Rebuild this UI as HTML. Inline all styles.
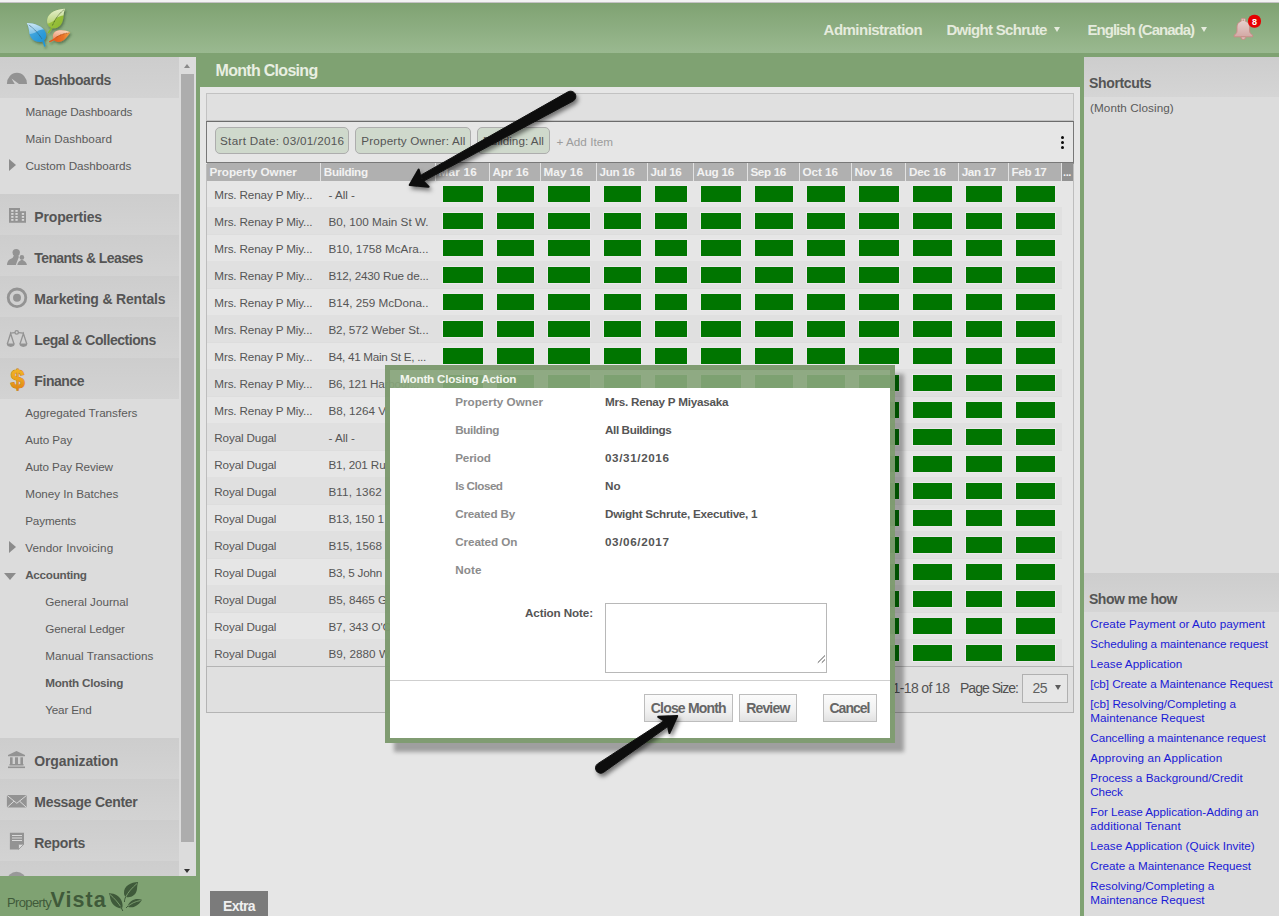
<!DOCTYPE html>
<html lang="en"><head><meta charset="utf-8"><title>Month Closing</title>
<style>
*{box-sizing:border-box;margin:0;padding:0}
html,body{width:1279px;height:916px;overflow:hidden}
body{position:relative;background:#7fa272;font-family:"Liberation Sans",sans-serif;font-size:13px;color:#555}
.abs{position:absolute}
.t{position:absolute;white-space:nowrap;display:block}
#topstrip{left:0;top:0;width:1279px;height:3px;background:linear-gradient(#f3f3f3 0,#f3f3f3 55%,#a9a6aa 100%)}
#hdr{left:0;top:3px;width:1279px;height:50px;background:linear-gradient(#7fa272,#9ab990)}
#nav{left:0;top:57px;width:179px;height:819px;background:#dcdcdc;overflow:hidden}
.nh{position:absolute;left:0;width:179px;height:41px;background:linear-gradient(#cdcdcd,#d3d3d3)}
#sb{left:179px;top:57px;width:17px;height:819px;background:#dcdcdc}
#sbthumb{left:181px;top:74px;width:13px;height:768px;background:#adadad}
#foot{left:0;top:876px;width:200px;height:40px;background:#7fa272}
#main{left:200px;top:87px;width:880px;height:829px;background:#e6e6e6}
#rp{left:1084px;top:57px;width:195px;height:859px;background:#dcdcdc}
.rph{position:absolute;left:0;width:195px;background:linear-gradient(#cdcdcd,#d5d5d5)}
</style></head>
<body>
<div class="abs" id="topstrip"></div>
<div class="abs" id="hdr"></div>
<svg class="abs" style="left:22px;top:4px" width="56" height="48" viewBox="22 4 56 48">
<defs>
<linearGradient id="lg" x1="0" y1="0" x2="1" y2="1"><stop offset="0" stop-color="#a6c84e"/><stop offset="1" stop-color="#8ab82a"/></linearGradient>
<linearGradient id="lb" x1="0" y1="0" x2="1" y2="1"><stop offset="0" stop-color="#58b0e0"/><stop offset="1" stop-color="#1c92d6"/></linearGradient>
<linearGradient id="lo" x1="0" y1="0" x2="1" y2="0"><stop offset="0" stop-color="#e4581c"/><stop offset=".6" stop-color="#e87428"/><stop offset="1" stop-color="#f2a848"/></linearGradient>
<linearGradient id="gl" x1="0" y1="0" x2="0" y2="1"><stop offset="0" stop-color="#fff" stop-opacity=".78"/><stop offset="1" stop-color="#fff" stop-opacity=".3"/></linearGradient>
<clipPath id="cg"><path d="M64.900 8.800 C58 9 48.500 12 47.200 19.500 C46.600 23.500 48.500 27.300 52.500 28.300 C58 28.800 62.500 25 63.300 18 C63.600 14.500 64 11.500 64.900 8.800 Z"/></clipPath>
<clipPath id="cb"><path d="M26.800 23.100 C33 23 44 26 46 33.500 C46.800 37 45 41 41 41.900 C35 42.500 30 38.500 29.300 33 C29 29.500 28.500 26 26.800 23.100 Z"/></clipPath>
<clipPath id="co"><path d="M70.200 32.400 C66 30 59 29.300 55.500 31.500 C52.500 33.500 52.200 37.500 54 40 C56 42.500 61 42.800 64.500 39.500 C67 37 68.500 34.500 70.200 32.400 Z"/></clipPath>
<filter id="ls" x="-30%" y="-30%" width="160%" height="170%"><feDropShadow dx="1.200" dy="1.800" stdDeviation="1.300" flood-color="#233a1c" flood-opacity=".5"/></filter>
</defs>
<g filter="url(#ls)">
<path d="M52.600 25.500 L47.600 32.800 L49 33.200 L53.600 26.500 Z" fill="#86b82c"/>
<path d="M64.900 8.800 C58 9 48.500 12 47.200 19.500 C46.600 23.500 48.500 27.300 52.500 28.300 C58 28.800 62.500 25 63.300 18 C63.600 14.500 64 11.500 64.900 8.800 Z" fill="url(#lg)"/>
<path d="M41.500 38.500 L44.300 46.900 L45.600 46 L43.400 38.200 Z" fill="#1e96d8"/>
<path d="M26.800 23.100 C33 23 44 26 46 33.500 C46.800 37 45 41 41 41.900 C35 42.500 30 38.500 29.300 33 C29 29.500 28.500 26 26.800 23.100 Z" fill="url(#lb)"/>
<path d="M56 37.500 L49 41.300 L49.500 42.400 L57 39 Z" fill="#e4581c"/>
<path d="M70.200 32.400 C66 30 59 29.300 55.500 31.500 C52.500 33.500 52.200 37.500 54 40 C56 42.500 61 42.800 64.500 39.500 C67 37 68.500 34.500 70.200 32.400 Z" fill="url(#lo)"/>
</g>
<g clip-path="url(#cg)"><path d="M44 7 H66 V15.200 C60 15.800 57.500 17 55 19.500 C52 22.500 49.500 23.500 45 24 Z" fill="url(#gl)"/></g>
<g clip-path="url(#cb)"><path d="M25 21 H47 V29.300 C42 28.800 39.500 29.800 37 31.500 C34 33.500 31.500 34 28 34.300 Z" fill="url(#gl)"/></g>
<g clip-path="url(#co)"><path d="M51 28 H70 L69 33 C63 33.200 57.500 35.500 52.500 39.500 L51 39 Z" fill="url(#gl)"/></g>
<g fill="none" stroke-width=".9" stroke-dasharray="1.100 .5">
<path d="M63.700 10 C58.500 14 55 19.500 52.300 25.800" stroke="#3c5420" stroke-opacity=".8"/>
<path d="M28.800 25 C34 28.500 38.500 33.500 42 39" stroke="#285068" stroke-opacity=".75"/>
<path d="M68.800 32.900 C63 33.500 59 35.500 55.500 37.800" stroke="#9a4418" stroke-opacity=".7"/>
</g>
</svg>
<span class="t" style="left:823.6px;top:19.8px;font-size:15px;font-weight:700;color:#e5ebdd;line-height:20px;letter-spacing:-0.525px;">Administration</span>
<span class="t" style="left:946.4px;top:19.8px;font-size:15px;font-weight:700;color:#e5ebdd;line-height:20px;letter-spacing:-0.687px;">Dwight Schrute</span>
<span class="t" style="left:1087.6px;top:19.8px;font-size:15px;font-weight:700;color:#e5ebdd;line-height:20px;letter-spacing:-1.007px;">English (Canada)</span>
<div class="abs" style="left:1054.400px;top:27.200px;border-left:3px solid transparent;border-right:3px solid transparent;border-top:5.500px solid #e5ebdd"></div>
<div class="abs" style="left:1201px;top:27.200px;border-left:3px solid transparent;border-right:3px solid transparent;border-top:5.500px solid #e5ebdd"></div>
<svg class="abs" style="left:1230px;top:12px" width="34" height="32" viewBox="1230 12 34 32">
<defs><linearGradient id="bg" x1="0" y1="0" x2="0" y2="1"><stop offset="0" stop-color="#e8d6d3"/><stop offset="1" stop-color="#d3a8a4"/></linearGradient></defs>
<g fill="url(#bg)" stroke="#cc8a86" stroke-width=".9" stroke-linejoin="round">
<path d="M1241.200 21.200 L1241.200 19.600 a1.200 1.200 0 0 1 1.200 -1.200 h1.800 a1.200 1.200 0 0 1 1.200 1.200 L1245.400 21.200 C1248.300 22 1249.600 24.500 1249.600 27 L1249.600 31 C1249.600 33 1251 34 1252.600 35 L1252.600 36.800 L1234.200 36.800 L1234.200 35 C1235.800 34 1237 33 1237 31 L1237 27 C1237 24.500 1238.300 22 1241.200 21.200 Z"/>
<path d="M1241.200 37 L1241.200 37.800 a2.100 1.700 0 0 0 4.200 0 L1245.400 37 Z"/>
</g>
<rect x="1242.500" y="19.600" width="1.600" height="1" fill="#b87a60"/>
<rect x="1248" y="14.800" width="13" height="13" rx="6" fill="#e60000"/>
<text x="1254.500" y="24.500" font-family="Liberation Sans, sans-serif" font-size="9" font-weight="700" fill="#fff" text-anchor="middle">8</text>
</svg>
<div class="abs" id="nav">
<div class="nh" style="top:0px"></div>
<div class="nh" style="top:137px"></div>
<div class="nh" style="top:178px"></div>
<div class="nh" style="top:219px"></div>
<div class="nh" style="top:260px"></div>
<div class="nh" style="top:301px"></div>
<div class="nh" style="top:681px"></div>
<div class="nh" style="top:722px"></div>
<div class="nh" style="top:763px"></div>
<div class="nh" style="top:804px"></div>
</div>
<span class="t" style="left:34.3px;top:70.1px;font-size:14px;font-weight:700;color:#555;line-height:20px;letter-spacing:-0.432px;">Dashboards</span>
<span class="t" style="left:34.3px;top:207.1px;font-size:14px;font-weight:700;color:#555;line-height:20px;letter-spacing:-0.155px;">Properties</span>
<span class="t" style="left:34.3px;top:248.1px;font-size:14px;font-weight:700;color:#555;line-height:20px;letter-spacing:-0.601px;">Tenants &amp; Leases</span>
<span class="t" style="left:34.3px;top:289.1px;font-size:14px;font-weight:700;color:#555;line-height:20px;letter-spacing:-0.189px;">Marketing &amp; Rentals</span>
<span class="t" style="left:34.3px;top:330.1px;font-size:14px;font-weight:700;color:#555;line-height:20px;letter-spacing:-0.443px;">Legal &amp; Collections</span>
<span class="t" style="left:34.3px;top:371.1px;font-size:14px;font-weight:700;color:#555;line-height:20px;letter-spacing:-0.429px;">Finance</span>
<span class="t" style="left:34.3px;top:751.1px;font-size:14px;font-weight:700;color:#555;line-height:20px;letter-spacing:-0.147px;">Organization</span>
<span class="t" style="left:34.3px;top:792.1px;font-size:14px;font-weight:700;color:#555;line-height:20px;letter-spacing:-0.306px;">Message Center</span>
<span class="t" style="left:34.3px;top:833.1px;font-size:14px;font-weight:700;color:#555;line-height:20px;letter-spacing:-0.315px;">Reports</span>
<span class="t" style="left:25.4px;top:101.9px;font-size:11.7px;font-weight:400;color:#5a5a5a;line-height:20px;letter-spacing:-0.095px;">Manage Dashboards</span>
<span class="t" style="left:25.4px;top:128.9px;font-size:11.7px;font-weight:400;color:#5a5a5a;line-height:20px;letter-spacing:0.060px;">Main Dashboard</span>
<span class="t" style="left:25.4px;top:155.9px;font-size:11.7px;font-weight:400;color:#5a5a5a;line-height:20px;letter-spacing:-0.032px;">Custom Dashboards</span>
<span class="t" style="left:25.2px;top:402.9px;font-size:11.7px;font-weight:400;color:#5a5a5a;line-height:20px;letter-spacing:-0.010px;">Aggregated Transfers</span>
<span class="t" style="left:25.2px;top:429.9px;font-size:11.7px;font-weight:400;color:#5a5a5a;line-height:20px;letter-spacing:-0.030px;">Auto Pay</span>
<span class="t" style="left:25.2px;top:456.9px;font-size:11.7px;font-weight:400;color:#5a5a5a;line-height:20px;letter-spacing:-0.080px;">Auto Pay Review</span>
<span class="t" style="left:25.2px;top:483.9px;font-size:11.7px;font-weight:400;color:#5a5a5a;line-height:20px;letter-spacing:-0.029px;">Money In Batches</span>
<span class="t" style="left:25.2px;top:510.9px;font-size:11.7px;font-weight:400;color:#5a5a5a;line-height:20px;letter-spacing:-0.134px;">Payments</span>
<span class="t" style="left:25.2px;top:537.9px;font-size:11.7px;font-weight:400;color:#5a5a5a;line-height:20px;letter-spacing:0.105px;">Vendor Invoicing</span>
<span class="t" style="left:25.2px;top:564.9px;font-size:11.7px;font-weight:700;color:#5a5a5a;line-height:20px;letter-spacing:-0.278px;">Accounting</span>
<span class="t" style="left:45.2px;top:591.9px;font-size:11.7px;font-weight:400;color:#5a5a5a;line-height:20px;letter-spacing:0.002px;">General Journal</span>
<span class="t" style="left:45.2px;top:618.9px;font-size:11.7px;font-weight:400;color:#5a5a5a;line-height:20px;letter-spacing:-0.110px;">General Ledger</span>
<span class="t" style="left:45.2px;top:645.9px;font-size:11.7px;font-weight:400;color:#5a5a5a;line-height:20px;letter-spacing:0.019px;">Manual Transactions</span>
<span class="t" style="left:45.2px;top:672.9px;font-size:11.7px;font-weight:700;color:#5a5a5a;line-height:20px;letter-spacing:-0.250px;">Month Closing</span>
<span class="t" style="left:45.2px;top:699.9px;font-size:11.7px;font-weight:400;color:#5a5a5a;line-height:20px;letter-spacing:-0.170px;">Year End</span>
<div class="abs" style="left:9px;top:159px;border-top:6.5px solid transparent;border-bottom:6.5px solid transparent;border-left:7px solid #8c8c8c"></div>
<div class="abs" style="left:9px;top:541px;border-top:6.5px solid transparent;border-bottom:6.5px solid transparent;border-left:7px solid #8c8c8c"></div>
<div class="abs" style="left:4px;top:573px;border-left:6.5px solid transparent;border-right:6.5px solid transparent;border-top:7px solid #8c8c8c"></div>
<svg class="abs" style="left:0;top:57px" width="34" height="820" viewBox="0 57 34 820">
<defs><linearGradient id="dg" x1="0" y1="0" x2="0" y2="1"><stop offset="0" stop-color="#f4bc28"/><stop offset=".55" stop-color="#eba01c"/><stop offset="1" stop-color="#dc7a10"/></linearGradient></defs>
<g fill="#939393">
<!-- dashboards gauge -->
<path d="M6.900 84 a10.050 11.200 0 0 1 20.100 0 h-8 l-7.500 -5.500 l3.200 5.500 Z"/>
<!-- properties building -->
<path d="M9 208 h11 v3.200 h6 v11.600 h-17 Z"/>
<g fill="#d8d8d8"><rect x="11.200" y="210" width="2.300" height="1.800"/><rect x="15.400" y="210" width="2.300" height="1.800"/><rect x="11.200" y="213" width="2.300" height="1.800"/><rect x="15.400" y="213" width="2.300" height="1.800"/><rect x="11.200" y="216" width="2.300" height="1.800"/><rect x="15.400" y="216" width="2.300" height="1.800"/><rect x="11.200" y="219" width="2.300" height="1.800"/><rect x="15.400" y="219" width="2.300" height="1.800"/><rect x="21.800" y="213" width="2.300" height="1.800"/><rect x="21.800" y="216" width="2.300" height="1.800"/><rect x="21.800" y="219" width="2.300" height="1.800"/></g>
<!-- tenants -->
<circle cx="16.200" cy="252.600" r="3.700"/><path d="M7 265 C7.300 260.500 9.500 259 12.500 258 L14.500 254.500 L19 256.500 L15.800 265 Z"/>
<circle cx="21.900" cy="257.400" r="2.300"/><path d="M17.300 265 C17.800 261.800 19.800 260.800 21.900 259.500 C24 260.800 26.500 261.800 27 265 Z"/>
</g>
<!-- marketing target -->
<circle cx="17" cy="297.800" r="8.800" fill="none" stroke="#939393" stroke-width="2.800"/><circle cx="17" cy="297.800" r="4" fill="#939393"/>
<!-- legal scales -->
<g fill="none" stroke="#939393" stroke-width="1.300"><circle cx="16.700" cy="332.400" r="1.700"/><path d="M10.300 333.200 L15 332.600 M18.400 332.600 L23.700 333.200"/><path d="M7.300 344 L10.600 333.500 L14 344"/><path d="M20 344 L23.400 333.500 L26.800 344"/></g>
<g fill="#939393"><path d="M6.800 343.600 h7.900 a3.950 3.300 0 0 1 -7.900 0 Z"/><path d="M19.400 343.600 h7.900 a3.950 3.300 0 0 1 -7.900 0 Z"/>
<!-- organization -->
<path d="M8 755 L16.500 751 L25 755 v1.200 h-17 Z"/><rect x="10" y="757.300" width="2.600" height="7.200"/><rect x="15" y="757.300" width="3" height="7.200"/><rect x="20.400" y="757.300" width="2.600" height="7.200"/><rect x="9.500" y="764" width="14" height="1.500"/><rect x="8" y="766.500" width="17" height="1.600"/>
<!-- message -->
<rect x="6.900" y="795" width="19.800" height="12.600" rx="1"/>
<!-- reports -->
<path d="M9.900 832.800 h14.100 v11.300 l-5.500 5.500 h-8.600 Z"/>
</g>
<g stroke="#dadada" stroke-width="1" fill="none"><path d="M7.300 795.600 L16.800 803.300 L26.300 795.600"/><path d="M7.400 807.200 L14 801.200"/><path d="M26.200 807.200 L19.600 801.200"/>
<path d="M12 835.500 h10 M12 838 h10 M12 840.500 h10"/></g>
<path d="M18.500 849.400 v-5.200 h5.400 Z" fill="#dcdcdc" stroke="#939393" stroke-width=".8"/>
<!-- partial next icon -->
<circle cx="16.500" cy="881.300" r="9.600" fill="#999"/>
<text x="17.600" y="388" font-family="Liberation Sans, sans-serif" font-size="25.500" font-weight="700" text-anchor="middle" fill="url(#dg)" stroke="#c87c0c" stroke-width=".9" paint-order="stroke">$</text>
</svg>
<div class="abs" id="sb"></div><div class="abs" id="sbthumb"></div>
<div class="abs" style="left:184px;top:64px;border-left:3.500px solid transparent;border-right:3.500px solid transparent;border-bottom:4px solid #8a8a8a"></div>
<div class="abs" style="left:184px;top:869px;border-left:3.500px solid transparent;border-right:3.500px solid transparent;border-top:4px solid #333"></div>
<div class="abs" id="foot"></div>
<span class="t" style="left:6.9px;top:892.9px;font-size:13px;font-weight:400;color:#3f5a3a;line-height:20px;letter-spacing:-0.605px;">Property</span>
<span class="t" style="left:50.6px;top:890.0px;font-size:21.5px;font-weight:700;color:#3f5a3a;line-height:20px;letter-spacing:1.000px;">Vista</span>
<svg class="abs" style="left:106px;top:878px" width="40" height="38" viewBox="106 878 40 38"><g fill="#3f5a3a">
<path d="M138.100 882 C131 882 123.500 886 124 893.500 C124.200 895.500 125 896.500 126.300 897 C131 898 136.500 895 137 889 C137.200 886.500 137.500 884 138.100 882 Z"/>
<path d="M108.800 893.300 C114 893 120.500 896 122 902 C122.800 905 122.800 907 121.900 908.500 C117 908.500 112 905 110.500 899.500 C110 897 109.800 895 108.800 893.300 Z"/>
<path d="M141.900 899.800 C137 898 130 899 127.500 906.400 C131 908.500 137.500 907.500 141.900 899.800 Z"/>
</g><g stroke="#7fa272" stroke-width=".9" fill="none"><path d="M137 883.500 C132 888 128 892 125.500 897.500"/><path d="M110 894.500 C114 898 119 903 122.300 909.500"/><path d="M140.500 900.500 C135 901.500 131 903.500 127 907"/></g>
<path d="M125.800 896.500 C124.800 899 124.300 900.500 124.500 902 M120.500 906 L122.800 911 M128 906 L126 908" stroke="#3f5a3a" stroke-width="1" fill="none"/></svg>
<span class="t" style="left:215.5px;top:60.5px;font-size:16px;font-weight:700;color:#e9efe2;line-height:20px;letter-spacing:-0.700px;">Month Closing</span>
<div class="abs" id="main"></div>
<div class="abs" style="left:206px;top:93px;width:868px;height:28px;background:#e0e0e0;border:1px solid #c2c2c2"></div>
<div class="abs" style="left:206px;top:121px;width:868px;height:42px;background:#e6e6e6;border:1px solid #787878;border-top-color:#6c6c6c"></div>
<div class="abs" style="left:215px;top:127px;width:134px;height:27px;background:#cfd9cc;border:1px solid #adadad;border-radius:5px;"></div>
<div class="abs" style="left:355px;top:127px;width:116px;height:27px;background:#cfd9cc;border:1px solid #adadad;border-radius:5px;"></div>
<div class="abs" style="left:477px;top:127px;width:73px;height:27px;background:#cfd9cc;border:1px solid #adadad;border-radius:5px;"></div>
<span class="t" style="left:220.0px;top:130.9px;font-size:11.7px;font-weight:400;color:#555;line-height:20px;letter-spacing:0.309px;">Start Date: 03/01/2016</span>
<span class="t" style="left:361.2px;top:130.9px;font-size:11.7px;font-weight:400;color:#555;line-height:20px;letter-spacing:0.190px;">Property Owner: All</span>
<span class="t" style="left:483.0px;top:130.9px;font-size:11.7px;font-weight:400;color:#555;line-height:20px;letter-spacing:0.043px;">Building: All</span>
<span class="t" style="left:556.5px;top:131.9px;font-size:11.7px;font-weight:400;color:#9c9c9c;line-height:20px;letter-spacing:0.030px;">+ Add Item</span>
<div class="abs" style="left:1060.750px;top:135.5px;width:3.400px;height:3.400px;border-radius:2px;background:#0a0a0a"></div>
<div class="abs" style="left:1060.750px;top:140.8px;width:3.400px;height:3.400px;border-radius:2px;background:#0a0a0a"></div>
<div class="abs" style="left:1060.750px;top:146.1px;width:3.400px;height:3.400px;border-radius:2px;background:#0a0a0a"></div>
<div class="abs" style="left:207px;top:163px;width:854px;height:18px;background:#b0b0b0"></div>
<div class="abs" style="left:1061px;top:163px;width:1px;height:18px;background:#e2e2e2"></div><div class="abs" style="left:1062px;top:163px;width:12px;height:18px;background:#929292"></div>
<div class="abs" style="left:320px;top:163px;width:1px;height:18px;background:#e2e2e2"></div>
<div class="abs" style="left:435px;top:163px;width:1px;height:18px;background:#e2e2e2"></div>
<div class="abs" style="left:489px;top:163px;width:1px;height:18px;background:#e2e2e2"></div>
<div class="abs" style="left:540px;top:163px;width:1px;height:18px;background:#e2e2e2"></div>
<div class="abs" style="left:596px;top:163px;width:1px;height:18px;background:#e2e2e2"></div>
<div class="abs" style="left:647px;top:163px;width:1px;height:18px;background:#e2e2e2"></div>
<div class="abs" style="left:693px;top:163px;width:1px;height:18px;background:#e2e2e2"></div>
<div class="abs" style="left:747px;top:163px;width:1px;height:18px;background:#e2e2e2"></div>
<div class="abs" style="left:799px;top:163px;width:1px;height:18px;background:#e2e2e2"></div>
<div class="abs" style="left:851px;top:163px;width:1px;height:18px;background:#e2e2e2"></div>
<div class="abs" style="left:905px;top:163px;width:1px;height:18px;background:#e2e2e2"></div>
<div class="abs" style="left:958px;top:163px;width:1px;height:18px;background:#e2e2e2"></div>
<div class="abs" style="left:1008px;top:163px;width:1px;height:18px;background:#e2e2e2"></div>
<span class="t" style="left:209.5px;top:161.9px;font-size:11.7px;font-weight:700;color:#f2f2f2;line-height:20px;letter-spacing:-0.028px;">Property Owner</span>
<span class="t" style="left:323.8px;top:161.9px;font-size:11.7px;font-weight:700;color:#f2f2f2;line-height:20px;letter-spacing:-0.356px;">Building</span>
<span class="t" style="left:438.5px;top:161.9px;font-size:11.7px;font-weight:700;color:#f2f2f2;line-height:20px;letter-spacing:0.242px;">Mar 16</span>
<span class="t" style="left:492.4px;top:161.9px;font-size:11.7px;font-weight:700;color:#f2f2f2;line-height:20px;letter-spacing:0.002px;">Apr 16</span>
<span class="t" style="left:543.5px;top:161.9px;font-size:11.7px;font-weight:700;color:#f2f2f2;line-height:20px;letter-spacing:0.086px;">May 16</span>
<span class="t" style="left:599.5px;top:161.9px;font-size:11.7px;font-weight:700;color:#f2f2f2;line-height:20px;letter-spacing:-0.372px;">Jun 16</span>
<span class="t" style="left:650.6px;top:161.9px;font-size:11.7px;font-weight:700;color:#f2f2f2;line-height:20px;letter-spacing:-0.373px;">Jul 16</span>
<span class="t" style="left:696.5px;top:161.9px;font-size:11.7px;font-weight:700;color:#f2f2f2;line-height:20px;letter-spacing:-0.245px;">Aug 16</span>
<span class="t" style="left:750.4px;top:161.9px;font-size:11.7px;font-weight:700;color:#f2f2f2;line-height:20px;letter-spacing:-0.348px;">Sep 16</span>
<span class="t" style="left:802.4px;top:161.9px;font-size:11.7px;font-weight:700;color:#f2f2f2;line-height:20px;letter-spacing:-0.022px;">Oct 16</span>
<span class="t" style="left:854.4px;top:161.9px;font-size:11.7px;font-weight:700;color:#f2f2f2;line-height:20px;letter-spacing:-0.055px;">Nov 16</span>
<span class="t" style="left:908.9px;top:161.9px;font-size:11.7px;font-weight:700;color:#f2f2f2;line-height:20px;letter-spacing:-0.134px;">Dec 16</span>
<span class="t" style="left:961.7px;top:161.9px;font-size:11.7px;font-weight:700;color:#f2f2f2;line-height:20px;letter-spacing:-0.365px;">Jan 17</span>
<span class="t" style="left:1011.5px;top:161.9px;font-size:11.7px;font-weight:700;color:#f2f2f2;line-height:20px;letter-spacing:-0.339px;">Feb 17</span>
<span class="t" style="left:1063.0px;top:162.2px;font-size:11px;font-weight:700;color:#f2f2f2;line-height:20px;letter-spacing:-0.391px;">...</span>
<div class="abs" style="left:207px;top:207px;width:855px;height:1px;background:#dddddd"></div>
<span class="t" style="left:214.3px;top:184.9px;font-size:11.7px;font-weight:400;color:#555;line-height:20px;letter-spacing:-0.147px;">Mrs. Renay P Miy...</span>
<span class="t" style="left:328.4px;top:184.9px;font-size:11.7px;font-weight:400;color:#555;line-height:20px;letter-spacing:-0.004px;">- All -</span>
<div class="abs" style="left:443px;top:186px;width:40px;height:16px;background:#007500;box-shadow:0 0 0 1px #ebe9eb"></div>
<div class="abs" style="left:497px;top:186px;width:37px;height:16px;background:#007500;box-shadow:0 0 0 1px #ebe9eb"></div>
<div class="abs" style="left:548px;top:186px;width:42px;height:16px;background:#007500;box-shadow:0 0 0 1px #ebe9eb"></div>
<div class="abs" style="left:604px;top:186px;width:37px;height:16px;background:#007500;box-shadow:0 0 0 1px #ebe9eb"></div>
<div class="abs" style="left:655px;top:186px;width:32px;height:16px;background:#007500;box-shadow:0 0 0 1px #ebe9eb"></div>
<div class="abs" style="left:701px;top:186px;width:40px;height:16px;background:#007500;box-shadow:0 0 0 1px #ebe9eb"></div>
<div class="abs" style="left:755px;top:186px;width:38px;height:16px;background:#007500;box-shadow:0 0 0 1px #ebe9eb"></div>
<div class="abs" style="left:807px;top:186px;width:38px;height:16px;background:#007500;box-shadow:0 0 0 1px #ebe9eb"></div>
<div class="abs" style="left:859px;top:186px;width:40px;height:16px;background:#007500;box-shadow:0 0 0 1px #ebe9eb"></div>
<div class="abs" style="left:913px;top:186px;width:39px;height:16px;background:#007500;box-shadow:0 0 0 1px #ebe9eb"></div>
<div class="abs" style="left:966px;top:186px;width:36px;height:16px;background:#007500;box-shadow:0 0 0 1px #ebe9eb"></div>
<div class="abs" style="left:1016px;top:186px;width:39px;height:16px;background:#007500;box-shadow:0 0 0 1px #ebe9eb"></div>
<div class="abs" style="left:207px;top:207px;width:855px;height:27px;background:#e0e0e0"></div>
<div class="abs" style="left:207px;top:234px;width:855px;height:1px;background:#dddddd"></div>
<span class="t" style="left:214.3px;top:211.9px;font-size:11.7px;font-weight:400;color:#555;line-height:20px;letter-spacing:-0.147px;">Mrs. Renay P Miy...</span>
<span class="t" style="left:328.4px;top:211.9px;font-size:11.7px;font-weight:400;color:#555;line-height:20px;letter-spacing:0.009px;">B0, 100 Main St W.</span>
<div class="abs" style="left:443px;top:213px;width:40px;height:16px;background:#007500;box-shadow:0 0 0 1px #ebe9eb"></div>
<div class="abs" style="left:497px;top:213px;width:37px;height:16px;background:#007500;box-shadow:0 0 0 1px #ebe9eb"></div>
<div class="abs" style="left:548px;top:213px;width:42px;height:16px;background:#007500;box-shadow:0 0 0 1px #ebe9eb"></div>
<div class="abs" style="left:604px;top:213px;width:37px;height:16px;background:#007500;box-shadow:0 0 0 1px #ebe9eb"></div>
<div class="abs" style="left:655px;top:213px;width:32px;height:16px;background:#007500;box-shadow:0 0 0 1px #ebe9eb"></div>
<div class="abs" style="left:701px;top:213px;width:40px;height:16px;background:#007500;box-shadow:0 0 0 1px #ebe9eb"></div>
<div class="abs" style="left:755px;top:213px;width:38px;height:16px;background:#007500;box-shadow:0 0 0 1px #ebe9eb"></div>
<div class="abs" style="left:807px;top:213px;width:38px;height:16px;background:#007500;box-shadow:0 0 0 1px #ebe9eb"></div>
<div class="abs" style="left:859px;top:213px;width:40px;height:16px;background:#007500;box-shadow:0 0 0 1px #ebe9eb"></div>
<div class="abs" style="left:913px;top:213px;width:39px;height:16px;background:#007500;box-shadow:0 0 0 1px #ebe9eb"></div>
<div class="abs" style="left:966px;top:213px;width:36px;height:16px;background:#007500;box-shadow:0 0 0 1px #ebe9eb"></div>
<div class="abs" style="left:1016px;top:213px;width:39px;height:16px;background:#007500;box-shadow:0 0 0 1px #ebe9eb"></div>
<div class="abs" style="left:207px;top:261px;width:855px;height:1px;background:#dddddd"></div>
<span class="t" style="left:214.3px;top:238.9px;font-size:11.7px;font-weight:400;color:#555;line-height:20px;letter-spacing:-0.147px;">Mrs. Renay P Miy...</span>
<span class="t" style="left:328.4px;top:238.9px;font-size:11.7px;font-weight:400;color:#555;line-height:20px;letter-spacing:0.009px;">B10, 1758 McAra...</span>
<div class="abs" style="left:443px;top:240px;width:40px;height:16px;background:#007500;box-shadow:0 0 0 1px #ebe9eb"></div>
<div class="abs" style="left:497px;top:240px;width:37px;height:16px;background:#007500;box-shadow:0 0 0 1px #ebe9eb"></div>
<div class="abs" style="left:548px;top:240px;width:42px;height:16px;background:#007500;box-shadow:0 0 0 1px #ebe9eb"></div>
<div class="abs" style="left:604px;top:240px;width:37px;height:16px;background:#007500;box-shadow:0 0 0 1px #ebe9eb"></div>
<div class="abs" style="left:655px;top:240px;width:32px;height:16px;background:#007500;box-shadow:0 0 0 1px #ebe9eb"></div>
<div class="abs" style="left:701px;top:240px;width:40px;height:16px;background:#007500;box-shadow:0 0 0 1px #ebe9eb"></div>
<div class="abs" style="left:755px;top:240px;width:38px;height:16px;background:#007500;box-shadow:0 0 0 1px #ebe9eb"></div>
<div class="abs" style="left:807px;top:240px;width:38px;height:16px;background:#007500;box-shadow:0 0 0 1px #ebe9eb"></div>
<div class="abs" style="left:859px;top:240px;width:40px;height:16px;background:#007500;box-shadow:0 0 0 1px #ebe9eb"></div>
<div class="abs" style="left:913px;top:240px;width:39px;height:16px;background:#007500;box-shadow:0 0 0 1px #ebe9eb"></div>
<div class="abs" style="left:966px;top:240px;width:36px;height:16px;background:#007500;box-shadow:0 0 0 1px #ebe9eb"></div>
<div class="abs" style="left:1016px;top:240px;width:39px;height:16px;background:#007500;box-shadow:0 0 0 1px #ebe9eb"></div>
<div class="abs" style="left:207px;top:261px;width:855px;height:27px;background:#e0e0e0"></div>
<div class="abs" style="left:207px;top:288px;width:855px;height:1px;background:#dddddd"></div>
<span class="t" style="left:214.3px;top:265.9px;font-size:11.7px;font-weight:400;color:#555;line-height:20px;letter-spacing:-0.147px;">Mrs. Renay P Miy...</span>
<span class="t" style="left:328.4px;top:265.9px;font-size:11.7px;font-weight:400;color:#555;line-height:20px;letter-spacing:-0.198px;">B12, 2430 Rue de...</span>
<div class="abs" style="left:443px;top:267px;width:40px;height:16px;background:#007500;box-shadow:0 0 0 1px #ebe9eb"></div>
<div class="abs" style="left:497px;top:267px;width:37px;height:16px;background:#007500;box-shadow:0 0 0 1px #ebe9eb"></div>
<div class="abs" style="left:548px;top:267px;width:42px;height:16px;background:#007500;box-shadow:0 0 0 1px #ebe9eb"></div>
<div class="abs" style="left:604px;top:267px;width:37px;height:16px;background:#007500;box-shadow:0 0 0 1px #ebe9eb"></div>
<div class="abs" style="left:655px;top:267px;width:32px;height:16px;background:#007500;box-shadow:0 0 0 1px #ebe9eb"></div>
<div class="abs" style="left:701px;top:267px;width:40px;height:16px;background:#007500;box-shadow:0 0 0 1px #ebe9eb"></div>
<div class="abs" style="left:755px;top:267px;width:38px;height:16px;background:#007500;box-shadow:0 0 0 1px #ebe9eb"></div>
<div class="abs" style="left:807px;top:267px;width:38px;height:16px;background:#007500;box-shadow:0 0 0 1px #ebe9eb"></div>
<div class="abs" style="left:859px;top:267px;width:40px;height:16px;background:#007500;box-shadow:0 0 0 1px #ebe9eb"></div>
<div class="abs" style="left:913px;top:267px;width:39px;height:16px;background:#007500;box-shadow:0 0 0 1px #ebe9eb"></div>
<div class="abs" style="left:966px;top:267px;width:36px;height:16px;background:#007500;box-shadow:0 0 0 1px #ebe9eb"></div>
<div class="abs" style="left:1016px;top:267px;width:39px;height:16px;background:#007500;box-shadow:0 0 0 1px #ebe9eb"></div>
<div class="abs" style="left:207px;top:315px;width:855px;height:1px;background:#dddddd"></div>
<span class="t" style="left:214.3px;top:292.9px;font-size:11.7px;font-weight:400;color:#555;line-height:20px;letter-spacing:-0.147px;">Mrs. Renay P Miy...</span>
<span class="t" style="left:328.4px;top:292.9px;font-size:11.7px;font-weight:400;color:#555;line-height:20px;letter-spacing:0.008px;">B14, 259 McDona..</span>
<div class="abs" style="left:443px;top:294px;width:40px;height:16px;background:#007500;box-shadow:0 0 0 1px #ebe9eb"></div>
<div class="abs" style="left:497px;top:294px;width:37px;height:16px;background:#007500;box-shadow:0 0 0 1px #ebe9eb"></div>
<div class="abs" style="left:548px;top:294px;width:42px;height:16px;background:#007500;box-shadow:0 0 0 1px #ebe9eb"></div>
<div class="abs" style="left:604px;top:294px;width:37px;height:16px;background:#007500;box-shadow:0 0 0 1px #ebe9eb"></div>
<div class="abs" style="left:655px;top:294px;width:32px;height:16px;background:#007500;box-shadow:0 0 0 1px #ebe9eb"></div>
<div class="abs" style="left:701px;top:294px;width:40px;height:16px;background:#007500;box-shadow:0 0 0 1px #ebe9eb"></div>
<div class="abs" style="left:755px;top:294px;width:38px;height:16px;background:#007500;box-shadow:0 0 0 1px #ebe9eb"></div>
<div class="abs" style="left:807px;top:294px;width:38px;height:16px;background:#007500;box-shadow:0 0 0 1px #ebe9eb"></div>
<div class="abs" style="left:859px;top:294px;width:40px;height:16px;background:#007500;box-shadow:0 0 0 1px #ebe9eb"></div>
<div class="abs" style="left:913px;top:294px;width:39px;height:16px;background:#007500;box-shadow:0 0 0 1px #ebe9eb"></div>
<div class="abs" style="left:966px;top:294px;width:36px;height:16px;background:#007500;box-shadow:0 0 0 1px #ebe9eb"></div>
<div class="abs" style="left:1016px;top:294px;width:39px;height:16px;background:#007500;box-shadow:0 0 0 1px #ebe9eb"></div>
<div class="abs" style="left:207px;top:315px;width:855px;height:27px;background:#e0e0e0"></div>
<div class="abs" style="left:207px;top:342px;width:855px;height:1px;background:#dddddd"></div>
<span class="t" style="left:214.3px;top:319.9px;font-size:11.7px;font-weight:400;color:#555;line-height:20px;letter-spacing:-0.147px;">Mrs. Renay P Miy...</span>
<span class="t" style="left:328.4px;top:319.9px;font-size:11.7px;font-weight:400;color:#555;line-height:20px;letter-spacing:-0.083px;">B2, 572 Weber St...</span>
<div class="abs" style="left:443px;top:321px;width:40px;height:16px;background:#007500;box-shadow:0 0 0 1px #ebe9eb"></div>
<div class="abs" style="left:497px;top:321px;width:37px;height:16px;background:#007500;box-shadow:0 0 0 1px #ebe9eb"></div>
<div class="abs" style="left:548px;top:321px;width:42px;height:16px;background:#007500;box-shadow:0 0 0 1px #ebe9eb"></div>
<div class="abs" style="left:604px;top:321px;width:37px;height:16px;background:#007500;box-shadow:0 0 0 1px #ebe9eb"></div>
<div class="abs" style="left:655px;top:321px;width:32px;height:16px;background:#007500;box-shadow:0 0 0 1px #ebe9eb"></div>
<div class="abs" style="left:701px;top:321px;width:40px;height:16px;background:#007500;box-shadow:0 0 0 1px #ebe9eb"></div>
<div class="abs" style="left:755px;top:321px;width:38px;height:16px;background:#007500;box-shadow:0 0 0 1px #ebe9eb"></div>
<div class="abs" style="left:807px;top:321px;width:38px;height:16px;background:#007500;box-shadow:0 0 0 1px #ebe9eb"></div>
<div class="abs" style="left:859px;top:321px;width:40px;height:16px;background:#007500;box-shadow:0 0 0 1px #ebe9eb"></div>
<div class="abs" style="left:913px;top:321px;width:39px;height:16px;background:#007500;box-shadow:0 0 0 1px #ebe9eb"></div>
<div class="abs" style="left:966px;top:321px;width:36px;height:16px;background:#007500;box-shadow:0 0 0 1px #ebe9eb"></div>
<div class="abs" style="left:1016px;top:321px;width:39px;height:16px;background:#007500;box-shadow:0 0 0 1px #ebe9eb"></div>
<div class="abs" style="left:207px;top:369px;width:855px;height:1px;background:#dddddd"></div>
<span class="t" style="left:214.3px;top:346.9px;font-size:11.7px;font-weight:400;color:#555;line-height:20px;letter-spacing:-0.147px;">Mrs. Renay P Miy...</span>
<span class="t" style="left:328.4px;top:346.9px;font-size:11.7px;font-weight:400;color:#555;line-height:20px;letter-spacing:-0.303px;">B4, 41 Main St E, ...</span>
<div class="abs" style="left:443px;top:348px;width:40px;height:16px;background:#007500;box-shadow:0 0 0 1px #ebe9eb"></div>
<div class="abs" style="left:497px;top:348px;width:37px;height:16px;background:#007500;box-shadow:0 0 0 1px #ebe9eb"></div>
<div class="abs" style="left:548px;top:348px;width:42px;height:16px;background:#007500;box-shadow:0 0 0 1px #ebe9eb"></div>
<div class="abs" style="left:604px;top:348px;width:37px;height:16px;background:#007500;box-shadow:0 0 0 1px #ebe9eb"></div>
<div class="abs" style="left:655px;top:348px;width:32px;height:16px;background:#007500;box-shadow:0 0 0 1px #ebe9eb"></div>
<div class="abs" style="left:701px;top:348px;width:40px;height:16px;background:#007500;box-shadow:0 0 0 1px #ebe9eb"></div>
<div class="abs" style="left:755px;top:348px;width:38px;height:16px;background:#007500;box-shadow:0 0 0 1px #ebe9eb"></div>
<div class="abs" style="left:807px;top:348px;width:38px;height:16px;background:#007500;box-shadow:0 0 0 1px #ebe9eb"></div>
<div class="abs" style="left:859px;top:348px;width:40px;height:16px;background:#007500;box-shadow:0 0 0 1px #ebe9eb"></div>
<div class="abs" style="left:913px;top:348px;width:39px;height:16px;background:#007500;box-shadow:0 0 0 1px #ebe9eb"></div>
<div class="abs" style="left:966px;top:348px;width:36px;height:16px;background:#007500;box-shadow:0 0 0 1px #ebe9eb"></div>
<div class="abs" style="left:1016px;top:348px;width:39px;height:16px;background:#007500;box-shadow:0 0 0 1px #ebe9eb"></div>
<div class="abs" style="left:207px;top:369px;width:855px;height:27px;background:#e0e0e0"></div>
<div class="abs" style="left:207px;top:396px;width:855px;height:1px;background:#dddddd"></div>
<span class="t" style="left:214.3px;top:373.9px;font-size:11.7px;font-weight:400;color:#555;line-height:20px;letter-spacing:-0.147px;">Mrs. Renay P Miy...</span>
<span class="t" style="left:328.4px;top:373.9px;font-size:11.7px;font-weight:400;color:#555;line-height:20px;letter-spacing:-0.237px;">B6, 121 Harbour...</span>
<div class="abs" style="left:443px;top:375px;width:40px;height:16px;background:#007500;box-shadow:0 0 0 1px #ebe9eb"></div>
<div class="abs" style="left:497px;top:375px;width:37px;height:16px;background:#007500;box-shadow:0 0 0 1px #ebe9eb"></div>
<div class="abs" style="left:548px;top:375px;width:42px;height:16px;background:#007500;box-shadow:0 0 0 1px #ebe9eb"></div>
<div class="abs" style="left:604px;top:375px;width:37px;height:16px;background:#007500;box-shadow:0 0 0 1px #ebe9eb"></div>
<div class="abs" style="left:655px;top:375px;width:32px;height:16px;background:#007500;box-shadow:0 0 0 1px #ebe9eb"></div>
<div class="abs" style="left:701px;top:375px;width:40px;height:16px;background:#007500;box-shadow:0 0 0 1px #ebe9eb"></div>
<div class="abs" style="left:755px;top:375px;width:38px;height:16px;background:#007500;box-shadow:0 0 0 1px #ebe9eb"></div>
<div class="abs" style="left:807px;top:375px;width:38px;height:16px;background:#007500;box-shadow:0 0 0 1px #ebe9eb"></div>
<div class="abs" style="left:859px;top:375px;width:40px;height:16px;background:#007500;box-shadow:0 0 0 1px #ebe9eb"></div>
<div class="abs" style="left:913px;top:375px;width:39px;height:16px;background:#007500;box-shadow:0 0 0 1px #ebe9eb"></div>
<div class="abs" style="left:966px;top:375px;width:36px;height:16px;background:#007500;box-shadow:0 0 0 1px #ebe9eb"></div>
<div class="abs" style="left:1016px;top:375px;width:39px;height:16px;background:#007500;box-shadow:0 0 0 1px #ebe9eb"></div>
<div class="abs" style="left:207px;top:423px;width:855px;height:1px;background:#dddddd"></div>
<span class="t" style="left:214.3px;top:400.9px;font-size:11.7px;font-weight:400;color:#555;line-height:20px;letter-spacing:-0.147px;">Mrs. Renay P Miy...</span>
<span class="t" style="left:328.4px;top:400.9px;font-size:11.7px;font-weight:400;color:#555;line-height:20px;letter-spacing:-0.024px;">B8, 1264 V</span>
<div class="abs" style="left:443px;top:402px;width:40px;height:16px;background:#007500;box-shadow:0 0 0 1px #ebe9eb"></div>
<div class="abs" style="left:497px;top:402px;width:37px;height:16px;background:#007500;box-shadow:0 0 0 1px #ebe9eb"></div>
<div class="abs" style="left:548px;top:402px;width:42px;height:16px;background:#007500;box-shadow:0 0 0 1px #ebe9eb"></div>
<div class="abs" style="left:604px;top:402px;width:37px;height:16px;background:#007500;box-shadow:0 0 0 1px #ebe9eb"></div>
<div class="abs" style="left:655px;top:402px;width:32px;height:16px;background:#007500;box-shadow:0 0 0 1px #ebe9eb"></div>
<div class="abs" style="left:701px;top:402px;width:40px;height:16px;background:#007500;box-shadow:0 0 0 1px #ebe9eb"></div>
<div class="abs" style="left:755px;top:402px;width:38px;height:16px;background:#007500;box-shadow:0 0 0 1px #ebe9eb"></div>
<div class="abs" style="left:807px;top:402px;width:38px;height:16px;background:#007500;box-shadow:0 0 0 1px #ebe9eb"></div>
<div class="abs" style="left:859px;top:402px;width:40px;height:16px;background:#007500;box-shadow:0 0 0 1px #ebe9eb"></div>
<div class="abs" style="left:913px;top:402px;width:39px;height:16px;background:#007500;box-shadow:0 0 0 1px #ebe9eb"></div>
<div class="abs" style="left:966px;top:402px;width:36px;height:16px;background:#007500;box-shadow:0 0 0 1px #ebe9eb"></div>
<div class="abs" style="left:1016px;top:402px;width:39px;height:16px;background:#007500;box-shadow:0 0 0 1px #ebe9eb"></div>
<div class="abs" style="left:207px;top:423px;width:855px;height:27px;background:#e0e0e0"></div>
<div class="abs" style="left:207px;top:450px;width:855px;height:1px;background:#dddddd"></div>
<span class="t" style="left:214.3px;top:427.9px;font-size:11.7px;font-weight:400;color:#555;line-height:20px;letter-spacing:-0.152px;">Royal Dugal</span>
<span class="t" style="left:328.4px;top:427.9px;font-size:11.7px;font-weight:400;color:#555;line-height:20px;letter-spacing:-0.004px;">- All -</span>
<div class="abs" style="left:443px;top:429px;width:40px;height:16px;background:#007500;box-shadow:0 0 0 1px #ebe9eb"></div>
<div class="abs" style="left:497px;top:429px;width:37px;height:16px;background:#007500;box-shadow:0 0 0 1px #ebe9eb"></div>
<div class="abs" style="left:548px;top:429px;width:42px;height:16px;background:#007500;box-shadow:0 0 0 1px #ebe9eb"></div>
<div class="abs" style="left:604px;top:429px;width:37px;height:16px;background:#007500;box-shadow:0 0 0 1px #ebe9eb"></div>
<div class="abs" style="left:655px;top:429px;width:32px;height:16px;background:#007500;box-shadow:0 0 0 1px #ebe9eb"></div>
<div class="abs" style="left:701px;top:429px;width:40px;height:16px;background:#007500;box-shadow:0 0 0 1px #ebe9eb"></div>
<div class="abs" style="left:755px;top:429px;width:38px;height:16px;background:#007500;box-shadow:0 0 0 1px #ebe9eb"></div>
<div class="abs" style="left:807px;top:429px;width:38px;height:16px;background:#007500;box-shadow:0 0 0 1px #ebe9eb"></div>
<div class="abs" style="left:859px;top:429px;width:40px;height:16px;background:#007500;box-shadow:0 0 0 1px #ebe9eb"></div>
<div class="abs" style="left:913px;top:429px;width:39px;height:16px;background:#007500;box-shadow:0 0 0 1px #ebe9eb"></div>
<div class="abs" style="left:966px;top:429px;width:36px;height:16px;background:#007500;box-shadow:0 0 0 1px #ebe9eb"></div>
<div class="abs" style="left:1016px;top:429px;width:39px;height:16px;background:#007500;box-shadow:0 0 0 1px #ebe9eb"></div>
<div class="abs" style="left:207px;top:477px;width:855px;height:1px;background:#dddddd"></div>
<span class="t" style="left:214.3px;top:454.9px;font-size:11.7px;font-weight:400;color:#555;line-height:20px;letter-spacing:-0.152px;">Royal Dugal</span>
<span class="t" style="left:328.4px;top:454.9px;font-size:11.7px;font-weight:400;color:#555;line-height:20px;letter-spacing:-0.138px;">B1, 201 Ru</span>
<div class="abs" style="left:443px;top:456px;width:40px;height:16px;background:#007500;box-shadow:0 0 0 1px #ebe9eb"></div>
<div class="abs" style="left:497px;top:456px;width:37px;height:16px;background:#007500;box-shadow:0 0 0 1px #ebe9eb"></div>
<div class="abs" style="left:548px;top:456px;width:42px;height:16px;background:#007500;box-shadow:0 0 0 1px #ebe9eb"></div>
<div class="abs" style="left:604px;top:456px;width:37px;height:16px;background:#007500;box-shadow:0 0 0 1px #ebe9eb"></div>
<div class="abs" style="left:655px;top:456px;width:32px;height:16px;background:#007500;box-shadow:0 0 0 1px #ebe9eb"></div>
<div class="abs" style="left:701px;top:456px;width:40px;height:16px;background:#007500;box-shadow:0 0 0 1px #ebe9eb"></div>
<div class="abs" style="left:755px;top:456px;width:38px;height:16px;background:#007500;box-shadow:0 0 0 1px #ebe9eb"></div>
<div class="abs" style="left:807px;top:456px;width:38px;height:16px;background:#007500;box-shadow:0 0 0 1px #ebe9eb"></div>
<div class="abs" style="left:859px;top:456px;width:40px;height:16px;background:#007500;box-shadow:0 0 0 1px #ebe9eb"></div>
<div class="abs" style="left:913px;top:456px;width:39px;height:16px;background:#007500;box-shadow:0 0 0 1px #ebe9eb"></div>
<div class="abs" style="left:966px;top:456px;width:36px;height:16px;background:#007500;box-shadow:0 0 0 1px #ebe9eb"></div>
<div class="abs" style="left:1016px;top:456px;width:39px;height:16px;background:#007500;box-shadow:0 0 0 1px #ebe9eb"></div>
<div class="abs" style="left:207px;top:477px;width:855px;height:27px;background:#e0e0e0"></div>
<div class="abs" style="left:207px;top:504px;width:855px;height:1px;background:#dddddd"></div>
<span class="t" style="left:214.3px;top:481.9px;font-size:11.7px;font-weight:400;color:#555;line-height:20px;letter-spacing:-0.152px;">Royal Dugal</span>
<span class="t" style="left:328.4px;top:481.9px;font-size:11.7px;font-weight:400;color:#555;line-height:20px;letter-spacing:0.131px;">B11, 1362</span>
<div class="abs" style="left:443px;top:483px;width:40px;height:16px;background:#007500;box-shadow:0 0 0 1px #ebe9eb"></div>
<div class="abs" style="left:497px;top:483px;width:37px;height:16px;background:#007500;box-shadow:0 0 0 1px #ebe9eb"></div>
<div class="abs" style="left:548px;top:483px;width:42px;height:16px;background:#007500;box-shadow:0 0 0 1px #ebe9eb"></div>
<div class="abs" style="left:604px;top:483px;width:37px;height:16px;background:#007500;box-shadow:0 0 0 1px #ebe9eb"></div>
<div class="abs" style="left:655px;top:483px;width:32px;height:16px;background:#007500;box-shadow:0 0 0 1px #ebe9eb"></div>
<div class="abs" style="left:701px;top:483px;width:40px;height:16px;background:#007500;box-shadow:0 0 0 1px #ebe9eb"></div>
<div class="abs" style="left:755px;top:483px;width:38px;height:16px;background:#007500;box-shadow:0 0 0 1px #ebe9eb"></div>
<div class="abs" style="left:807px;top:483px;width:38px;height:16px;background:#007500;box-shadow:0 0 0 1px #ebe9eb"></div>
<div class="abs" style="left:859px;top:483px;width:40px;height:16px;background:#007500;box-shadow:0 0 0 1px #ebe9eb"></div>
<div class="abs" style="left:913px;top:483px;width:39px;height:16px;background:#007500;box-shadow:0 0 0 1px #ebe9eb"></div>
<div class="abs" style="left:966px;top:483px;width:36px;height:16px;background:#007500;box-shadow:0 0 0 1px #ebe9eb"></div>
<div class="abs" style="left:1016px;top:483px;width:39px;height:16px;background:#007500;box-shadow:0 0 0 1px #ebe9eb"></div>
<div class="abs" style="left:207px;top:531px;width:855px;height:1px;background:#dddddd"></div>
<span class="t" style="left:214.3px;top:508.9px;font-size:11.7px;font-weight:400;color:#555;line-height:20px;letter-spacing:-0.152px;">Royal Dugal</span>
<span class="t" style="left:328.4px;top:508.9px;font-size:11.7px;font-weight:400;color:#555;line-height:20px;letter-spacing:-0.115px;">B13, 150 1</span>
<div class="abs" style="left:443px;top:510px;width:40px;height:16px;background:#007500;box-shadow:0 0 0 1px #ebe9eb"></div>
<div class="abs" style="left:497px;top:510px;width:37px;height:16px;background:#007500;box-shadow:0 0 0 1px #ebe9eb"></div>
<div class="abs" style="left:548px;top:510px;width:42px;height:16px;background:#007500;box-shadow:0 0 0 1px #ebe9eb"></div>
<div class="abs" style="left:604px;top:510px;width:37px;height:16px;background:#007500;box-shadow:0 0 0 1px #ebe9eb"></div>
<div class="abs" style="left:655px;top:510px;width:32px;height:16px;background:#007500;box-shadow:0 0 0 1px #ebe9eb"></div>
<div class="abs" style="left:701px;top:510px;width:40px;height:16px;background:#007500;box-shadow:0 0 0 1px #ebe9eb"></div>
<div class="abs" style="left:755px;top:510px;width:38px;height:16px;background:#007500;box-shadow:0 0 0 1px #ebe9eb"></div>
<div class="abs" style="left:807px;top:510px;width:38px;height:16px;background:#007500;box-shadow:0 0 0 1px #ebe9eb"></div>
<div class="abs" style="left:859px;top:510px;width:40px;height:16px;background:#007500;box-shadow:0 0 0 1px #ebe9eb"></div>
<div class="abs" style="left:913px;top:510px;width:39px;height:16px;background:#007500;box-shadow:0 0 0 1px #ebe9eb"></div>
<div class="abs" style="left:966px;top:510px;width:36px;height:16px;background:#007500;box-shadow:0 0 0 1px #ebe9eb"></div>
<div class="abs" style="left:1016px;top:510px;width:39px;height:16px;background:#007500;box-shadow:0 0 0 1px #ebe9eb"></div>
<div class="abs" style="left:207px;top:531px;width:855px;height:27px;background:#e0e0e0"></div>
<div class="abs" style="left:207px;top:558px;width:855px;height:1px;background:#dddddd"></div>
<span class="t" style="left:214.3px;top:535.9px;font-size:11.7px;font-weight:400;color:#555;line-height:20px;letter-spacing:-0.152px;">Royal Dugal</span>
<span class="t" style="left:328.4px;top:535.9px;font-size:11.7px;font-weight:400;color:#555;line-height:20px;letter-spacing:0.034px;">B15, 1568</span>
<div class="abs" style="left:443px;top:537px;width:40px;height:16px;background:#007500;box-shadow:0 0 0 1px #ebe9eb"></div>
<div class="abs" style="left:497px;top:537px;width:37px;height:16px;background:#007500;box-shadow:0 0 0 1px #ebe9eb"></div>
<div class="abs" style="left:548px;top:537px;width:42px;height:16px;background:#007500;box-shadow:0 0 0 1px #ebe9eb"></div>
<div class="abs" style="left:604px;top:537px;width:37px;height:16px;background:#007500;box-shadow:0 0 0 1px #ebe9eb"></div>
<div class="abs" style="left:655px;top:537px;width:32px;height:16px;background:#007500;box-shadow:0 0 0 1px #ebe9eb"></div>
<div class="abs" style="left:701px;top:537px;width:40px;height:16px;background:#007500;box-shadow:0 0 0 1px #ebe9eb"></div>
<div class="abs" style="left:755px;top:537px;width:38px;height:16px;background:#007500;box-shadow:0 0 0 1px #ebe9eb"></div>
<div class="abs" style="left:807px;top:537px;width:38px;height:16px;background:#007500;box-shadow:0 0 0 1px #ebe9eb"></div>
<div class="abs" style="left:859px;top:537px;width:40px;height:16px;background:#007500;box-shadow:0 0 0 1px #ebe9eb"></div>
<div class="abs" style="left:913px;top:537px;width:39px;height:16px;background:#007500;box-shadow:0 0 0 1px #ebe9eb"></div>
<div class="abs" style="left:966px;top:537px;width:36px;height:16px;background:#007500;box-shadow:0 0 0 1px #ebe9eb"></div>
<div class="abs" style="left:1016px;top:537px;width:39px;height:16px;background:#007500;box-shadow:0 0 0 1px #ebe9eb"></div>
<div class="abs" style="left:207px;top:585px;width:855px;height:1px;background:#dddddd"></div>
<span class="t" style="left:214.3px;top:562.9px;font-size:11.7px;font-weight:400;color:#555;line-height:20px;letter-spacing:-0.152px;">Royal Dugal</span>
<span class="t" style="left:328.4px;top:562.9px;font-size:11.7px;font-weight:400;color:#555;line-height:20px;letter-spacing:-0.229px;">B3, 5 John</span>
<div class="abs" style="left:443px;top:564px;width:40px;height:16px;background:#007500;box-shadow:0 0 0 1px #ebe9eb"></div>
<div class="abs" style="left:497px;top:564px;width:37px;height:16px;background:#007500;box-shadow:0 0 0 1px #ebe9eb"></div>
<div class="abs" style="left:548px;top:564px;width:42px;height:16px;background:#007500;box-shadow:0 0 0 1px #ebe9eb"></div>
<div class="abs" style="left:604px;top:564px;width:37px;height:16px;background:#007500;box-shadow:0 0 0 1px #ebe9eb"></div>
<div class="abs" style="left:655px;top:564px;width:32px;height:16px;background:#007500;box-shadow:0 0 0 1px #ebe9eb"></div>
<div class="abs" style="left:701px;top:564px;width:40px;height:16px;background:#007500;box-shadow:0 0 0 1px #ebe9eb"></div>
<div class="abs" style="left:755px;top:564px;width:38px;height:16px;background:#007500;box-shadow:0 0 0 1px #ebe9eb"></div>
<div class="abs" style="left:807px;top:564px;width:38px;height:16px;background:#007500;box-shadow:0 0 0 1px #ebe9eb"></div>
<div class="abs" style="left:859px;top:564px;width:40px;height:16px;background:#007500;box-shadow:0 0 0 1px #ebe9eb"></div>
<div class="abs" style="left:913px;top:564px;width:39px;height:16px;background:#007500;box-shadow:0 0 0 1px #ebe9eb"></div>
<div class="abs" style="left:966px;top:564px;width:36px;height:16px;background:#007500;box-shadow:0 0 0 1px #ebe9eb"></div>
<div class="abs" style="left:1016px;top:564px;width:39px;height:16px;background:#007500;box-shadow:0 0 0 1px #ebe9eb"></div>
<div class="abs" style="left:207px;top:585px;width:855px;height:27px;background:#e0e0e0"></div>
<div class="abs" style="left:207px;top:612px;width:855px;height:1px;background:#dddddd"></div>
<span class="t" style="left:214.3px;top:589.9px;font-size:11.7px;font-weight:400;color:#555;line-height:20px;letter-spacing:-0.152px;">Royal Dugal</span>
<span class="t" style="left:328.4px;top:589.9px;font-size:11.7px;font-weight:400;color:#555;line-height:20px;letter-spacing:-0.054px;">B5, 8465 G</span>
<div class="abs" style="left:443px;top:591px;width:40px;height:16px;background:#007500;box-shadow:0 0 0 1px #ebe9eb"></div>
<div class="abs" style="left:497px;top:591px;width:37px;height:16px;background:#007500;box-shadow:0 0 0 1px #ebe9eb"></div>
<div class="abs" style="left:548px;top:591px;width:42px;height:16px;background:#007500;box-shadow:0 0 0 1px #ebe9eb"></div>
<div class="abs" style="left:604px;top:591px;width:37px;height:16px;background:#007500;box-shadow:0 0 0 1px #ebe9eb"></div>
<div class="abs" style="left:655px;top:591px;width:32px;height:16px;background:#007500;box-shadow:0 0 0 1px #ebe9eb"></div>
<div class="abs" style="left:701px;top:591px;width:40px;height:16px;background:#007500;box-shadow:0 0 0 1px #ebe9eb"></div>
<div class="abs" style="left:755px;top:591px;width:38px;height:16px;background:#007500;box-shadow:0 0 0 1px #ebe9eb"></div>
<div class="abs" style="left:807px;top:591px;width:38px;height:16px;background:#007500;box-shadow:0 0 0 1px #ebe9eb"></div>
<div class="abs" style="left:859px;top:591px;width:40px;height:16px;background:#007500;box-shadow:0 0 0 1px #ebe9eb"></div>
<div class="abs" style="left:913px;top:591px;width:39px;height:16px;background:#007500;box-shadow:0 0 0 1px #ebe9eb"></div>
<div class="abs" style="left:966px;top:591px;width:36px;height:16px;background:#007500;box-shadow:0 0 0 1px #ebe9eb"></div>
<div class="abs" style="left:1016px;top:591px;width:39px;height:16px;background:#007500;box-shadow:0 0 0 1px #ebe9eb"></div>
<div class="abs" style="left:207px;top:639px;width:855px;height:1px;background:#dddddd"></div>
<span class="t" style="left:214.3px;top:616.9px;font-size:11.7px;font-weight:400;color:#555;line-height:20px;letter-spacing:-0.152px;">Royal Dugal</span>
<span class="t" style="left:328.4px;top:616.9px;font-size:11.7px;font-weight:400;color:#555;line-height:20px;letter-spacing:-0.065px;">B7, 343 O'C</span>
<div class="abs" style="left:443px;top:618px;width:40px;height:16px;background:#007500;box-shadow:0 0 0 1px #ebe9eb"></div>
<div class="abs" style="left:497px;top:618px;width:37px;height:16px;background:#007500;box-shadow:0 0 0 1px #ebe9eb"></div>
<div class="abs" style="left:548px;top:618px;width:42px;height:16px;background:#007500;box-shadow:0 0 0 1px #ebe9eb"></div>
<div class="abs" style="left:604px;top:618px;width:37px;height:16px;background:#007500;box-shadow:0 0 0 1px #ebe9eb"></div>
<div class="abs" style="left:655px;top:618px;width:32px;height:16px;background:#007500;box-shadow:0 0 0 1px #ebe9eb"></div>
<div class="abs" style="left:701px;top:618px;width:40px;height:16px;background:#007500;box-shadow:0 0 0 1px #ebe9eb"></div>
<div class="abs" style="left:755px;top:618px;width:38px;height:16px;background:#007500;box-shadow:0 0 0 1px #ebe9eb"></div>
<div class="abs" style="left:807px;top:618px;width:38px;height:16px;background:#007500;box-shadow:0 0 0 1px #ebe9eb"></div>
<div class="abs" style="left:859px;top:618px;width:40px;height:16px;background:#007500;box-shadow:0 0 0 1px #ebe9eb"></div>
<div class="abs" style="left:913px;top:618px;width:39px;height:16px;background:#007500;box-shadow:0 0 0 1px #ebe9eb"></div>
<div class="abs" style="left:966px;top:618px;width:36px;height:16px;background:#007500;box-shadow:0 0 0 1px #ebe9eb"></div>
<div class="abs" style="left:1016px;top:618px;width:39px;height:16px;background:#007500;box-shadow:0 0 0 1px #ebe9eb"></div>
<div class="abs" style="left:207px;top:639px;width:855px;height:27px;background:#e0e0e0"></div>
<div class="abs" style="left:207px;top:666px;width:855px;height:1px;background:#dddddd"></div>
<span class="t" style="left:214.3px;top:643.9px;font-size:11.7px;font-weight:400;color:#555;line-height:20px;letter-spacing:-0.152px;">Royal Dugal</span>
<span class="t" style="left:328.4px;top:643.9px;font-size:11.7px;font-weight:400;color:#555;line-height:20px;letter-spacing:0.052px;">B9, 2880 W</span>
<div class="abs" style="left:443px;top:645px;width:40px;height:16px;background:#007500;box-shadow:0 0 0 1px #ebe9eb"></div>
<div class="abs" style="left:497px;top:645px;width:37px;height:16px;background:#007500;box-shadow:0 0 0 1px #ebe9eb"></div>
<div class="abs" style="left:548px;top:645px;width:42px;height:16px;background:#007500;box-shadow:0 0 0 1px #ebe9eb"></div>
<div class="abs" style="left:604px;top:645px;width:37px;height:16px;background:#007500;box-shadow:0 0 0 1px #ebe9eb"></div>
<div class="abs" style="left:655px;top:645px;width:32px;height:16px;background:#007500;box-shadow:0 0 0 1px #ebe9eb"></div>
<div class="abs" style="left:701px;top:645px;width:40px;height:16px;background:#007500;box-shadow:0 0 0 1px #ebe9eb"></div>
<div class="abs" style="left:755px;top:645px;width:38px;height:16px;background:#007500;box-shadow:0 0 0 1px #ebe9eb"></div>
<div class="abs" style="left:807px;top:645px;width:38px;height:16px;background:#007500;box-shadow:0 0 0 1px #ebe9eb"></div>
<div class="abs" style="left:859px;top:645px;width:40px;height:16px;background:#007500;box-shadow:0 0 0 1px #ebe9eb"></div>
<div class="abs" style="left:913px;top:645px;width:39px;height:16px;background:#007500;box-shadow:0 0 0 1px #ebe9eb"></div>
<div class="abs" style="left:966px;top:645px;width:36px;height:16px;background:#007500;box-shadow:0 0 0 1px #ebe9eb"></div>
<div class="abs" style="left:1016px;top:645px;width:39px;height:16px;background:#007500;box-shadow:0 0 0 1px #ebe9eb"></div>
<div class="abs" style="left:206px;top:164px;width:1px;height:503px;background:#bdbdbd"></div>
<div class="abs" style="left:1073px;top:164px;width:1px;height:503px;background:#bdbdbd"></div>
<div class="abs" style="left:206px;top:666px;width:868px;height:47px;background:#e0e0e0;border:1px solid #b4b4b4"></div>
<span class="t" style="left:892.5px;top:678.1px;font-size:14px;font-weight:400;color:#555;line-height:20px;letter-spacing:-0.616px;">1-18 of 18</span>
<span class="t" style="left:960.0px;top:678.1px;font-size:14px;font-weight:400;color:#505050;line-height:20px;letter-spacing:-0.972px;">Page Size:</span>
<div class="abs" style="left:1022px;top:674px;width:46px;height:29px;background:#e6e6e6;border:1px solid #b0b0b0"></div>
<span class="t" style="left:1032.5px;top:678.1px;font-size:14px;font-weight:400;color:#606060;line-height:20px;letter-spacing:-0.639px;">25</span>
<div class="abs" style="left:1054.500px;top:685px;border-left:3.300px solid transparent;border-right:3.300px solid transparent;border-top:5.500px solid #5c5c5c"></div>
<div class="abs" style="left:210px;top:891px;width:58px;height:25px;background:#7b7b7b"></div>
<span class="t" style="left:223.0px;top:896.1px;font-size:14px;font-weight:700;color:#f0f0f0;line-height:20px;letter-spacing:-0.606px;">Extra</span>
<div class="abs" id="rp"><div class="rph" style="top:0;height:40px"></div><div class="rph" style="top:516px;height:39px"></div></div>
<span class="t" style="left:1089.0px;top:73.1px;font-size:14px;font-weight:700;color:#555;line-height:20px;letter-spacing:-0.349px;">Shortcuts</span>
<span class="t" style="left:1090.0px;top:97.9px;font-size:11.7px;font-weight:400;color:#5a5a5a;line-height:20px;letter-spacing:0.087px;">(Month Closing)</span>
<span class="t" style="left:1089.0px;top:589.1px;font-size:14px;font-weight:700;color:#555;line-height:20px;letter-spacing:-0.486px;">Show me how</span>
<span class="t" style="left:1090.3px;top:613.9px;font-size:11.7px;font-weight:400;color:#1a1ad6;line-height:20px;letter-spacing:0.063px;">Create Payment or Auto payment</span>
<span class="t" style="left:1090.3px;top:633.9px;font-size:11.7px;font-weight:400;color:#1a1ad6;line-height:20px;letter-spacing:-0.071px;">Scheduling a maintenance request</span>
<span class="t" style="left:1090.3px;top:653.9px;font-size:11.7px;font-weight:400;color:#1a1ad6;line-height:20px;letter-spacing:0.022px;">Lease Application</span>
<span class="t" style="left:1090.3px;top:673.9px;font-size:11.7px;font-weight:400;color:#1a1ad6;line-height:20px;letter-spacing:-0.048px;">[cb] Create a Maintenance Request</span>
<span class="t" style="left:1090.3px;top:693.9px;font-size:11.7px;font-weight:400;color:#1a1ad6;line-height:20px;letter-spacing:0.006px;">[cb] Resolving/Completing a</span>
<span class="t" style="left:1090.3px;top:707.9px;font-size:11.7px;font-weight:400;color:#1a1ad6;line-height:20px;letter-spacing:0.031px;">Maintenance Request</span>
<span class="t" style="left:1090.3px;top:727.9px;font-size:11.7px;font-weight:400;color:#1a1ad6;line-height:20px;letter-spacing:-0.039px;">Cancelling a maintenance request</span>
<span class="t" style="left:1090.3px;top:747.9px;font-size:11.7px;font-weight:400;color:#1a1ad6;line-height:20px;letter-spacing:0.139px;">Approving an Application</span>
<span class="t" style="left:1090.3px;top:767.9px;font-size:11.7px;font-weight:400;color:#1a1ad6;line-height:20px;letter-spacing:0.014px;">Process a Background/Credit</span>
<span class="t" style="left:1090.3px;top:781.9px;font-size:11.7px;font-weight:400;color:#1a1ad6;line-height:20px;letter-spacing:-0.168px;">Check</span>
<span class="t" style="left:1090.3px;top:801.9px;font-size:11.7px;font-weight:400;color:#1a1ad6;line-height:20px;letter-spacing:-0.021px;">For Lease Application-Adding an</span>
<span class="t" style="left:1090.3px;top:815.9px;font-size:11.7px;font-weight:400;color:#1a1ad6;line-height:20px;letter-spacing:0.137px;">additional Tenant</span>
<span class="t" style="left:1090.3px;top:835.9px;font-size:11.7px;font-weight:400;color:#1a1ad6;line-height:20px;letter-spacing:0.024px;">Lease Application (Quick Invite)</span>
<span class="t" style="left:1090.3px;top:855.9px;font-size:11.7px;font-weight:400;color:#1a1ad6;line-height:20px;letter-spacing:-0.039px;">Create a Maintenance Request</span>
<span class="t" style="left:1090.3px;top:875.9px;font-size:11.7px;font-weight:400;color:#1a1ad6;line-height:20px;letter-spacing:0.030px;">Resolving/Completing a</span>
<span class="t" style="left:1090.3px;top:889.9px;font-size:11.7px;font-weight:400;color:#1a1ad6;line-height:20px;letter-spacing:0.031px;">Maintenance Request</span>
<div class="abs" style="left:385px;top:365px;width:510px;height:377.500px;border:5px solid rgba(124,153,109,.97);box-shadow:9px 9px 4px 0 rgba(0,0,0,.31)"><div class="abs" style="left:0;top:0;width:500px;height:18px;background:rgba(136,165,123,.92)"></div><div class="abs" style="left:0;top:18px;width:500px;height:349.500px;background:#fff"></div><div class="abs" style="left:0;top:310px;width:500px;height:1px;background:#cfcfcf"></div><div class="abs" style="left:215px;top:233px;width:222px;height:70px;background:#fff;border:1px solid #b8b8b8"></div><svg class="abs" style="left:425.700px;top:284.300px" width="10" height="10" viewBox="0 0 10 10"><path d="M9 1.500 L1.800 8.700 M9 5.500 L5.800 8.700" stroke="#555" stroke-width="1"/></svg></div>
<span class="t" style="left:400.0px;top:368.9px;font-size:11.7px;font-weight:700;color:#f3f6ef;line-height:20px;letter-spacing:-0.201px;">Month Closing Action</span>
<span class="t" style="left:455.2px;top:391.9px;font-size:11.7px;font-weight:700;color:#8c8c8c;line-height:20px;letter-spacing:0.008px;">Property Owner</span>
<span class="t" style="left:455.2px;top:419.9px;font-size:11.7px;font-weight:700;color:#8c8c8c;line-height:20px;letter-spacing:-0.369px;">Building</span>
<span class="t" style="left:455.2px;top:447.9px;font-size:11.7px;font-weight:700;color:#8c8c8c;line-height:20px;letter-spacing:-0.146px;">Period</span>
<span class="t" style="left:455.2px;top:475.9px;font-size:11.7px;font-weight:700;color:#8c8c8c;line-height:20px;letter-spacing:-0.519px;">Is Closed</span>
<span class="t" style="left:455.2px;top:503.9px;font-size:11.7px;font-weight:700;color:#8c8c8c;line-height:20px;letter-spacing:-0.192px;">Created By</span>
<span class="t" style="left:455.2px;top:531.9px;font-size:11.7px;font-weight:700;color:#8c8c8c;line-height:20px;letter-spacing:-0.090px;">Created On</span>
<span class="t" style="left:455.2px;top:559.9px;font-size:11.7px;font-weight:700;color:#8c8c8c;line-height:20px;letter-spacing:0.154px;">Note</span>
<span class="t" style="left:605.0px;top:391.9px;font-size:11.7px;font-weight:700;color:#555;line-height:20px;letter-spacing:-0.249px;">Mrs. Renay P Miyasaka</span>
<span class="t" style="left:605.0px;top:419.9px;font-size:11.7px;font-weight:700;color:#555;line-height:20px;letter-spacing:-0.394px;">All Buildings</span>
<span class="t" style="left:605.0px;top:447.9px;font-size:11.7px;font-weight:700;color:#555;line-height:20px;letter-spacing:0.610px;">03/31/2016</span>
<span class="t" style="left:605.0px;top:475.9px;font-size:11.7px;font-weight:700;color:#555;line-height:20px;letter-spacing:0.003px;">No</span>
<span class="t" style="left:605.0px;top:503.9px;font-size:11.7px;font-weight:700;color:#555;line-height:20px;letter-spacing:-0.267px;">Dwight Schrute, Executive, 1</span>
<span class="t" style="left:605.0px;top:531.9px;font-size:11.7px;font-weight:700;color:#555;line-height:20px;letter-spacing:0.610px;">03/06/2017</span>
<span class="t" style="left:525.0px;top:602.9px;font-size:11.7px;font-weight:700;color:#555;line-height:20px;letter-spacing:-0.131px;">Action Note:</span>
<div class="abs" style="left:644px;top:694px;width:89px;height:27.500px;background:linear-gradient(#fbfbfb,#f1f1f1 60%,#e2e2e2);border:1px solid #bdbdbd;"></div>
<div class="abs" style="left:739px;top:694px;width:58px;height:27.500px;background:linear-gradient(#fbfbfb,#f1f1f1 60%,#e2e2e2);border:1px solid #bdbdbd;"></div>
<div class="abs" style="left:823px;top:694px;width:54px;height:27.500px;background:linear-gradient(#fbfbfb,#f1f1f1 60%,#e2e2e2);border:1px solid #bdbdbd;"></div>
<span class="t" style="left:650.8px;top:698.1px;font-size:14px;font-weight:700;color:#666;line-height:20px;letter-spacing:-0.818px;">Close Month</span>
<span class="t" style="left:746.2px;top:698.1px;font-size:14px;font-weight:700;color:#666;line-height:20px;letter-spacing:-0.833px;">Review</span>
<span class="t" style="left:829.5px;top:698.1px;font-size:14px;font-weight:700;color:#666;line-height:20px;letter-spacing:-0.987px;">Cancel</span>
<svg class="abs" style="left:0;top:0;pointer-events:none" width="1279" height="916" viewBox="0 0 1279 916">
<defs><filter id="as" x="-20%" y="-20%" width="140%" height="150%"><feDropShadow dx="2" dy="3" stdDeviation="2.200" flood-color="#000" flood-opacity=".5"/></filter></defs>
<g filter="url(#as)" fill="#0a0a0a" stroke="#0a0a0a" stroke-linejoin="round">
<path d="M568.100 91.800 L420.500 175.400 L423.500 181.100 L573.100 101 A5.200 5.200 0 0 0 568.100 91.800 Z" stroke-width="1"/>
<path d="M409.700 185 L418.700 169.500 L420.800 178.600 L428.600 186.700 Z" stroke-width="2"/>
<path d="M597.500 763.900 L664.500 720.500 L668.300 726.100 L603.300 772.500 A5.200 5.200 0 0 1 597.500 763.900 Z" stroke-width="1"/>
<path d="M677.200 716 L658.200 716.800 L667.400 722.600 L669.400 733 Z" stroke-width="2"/>
</g></svg>
</body></html>
